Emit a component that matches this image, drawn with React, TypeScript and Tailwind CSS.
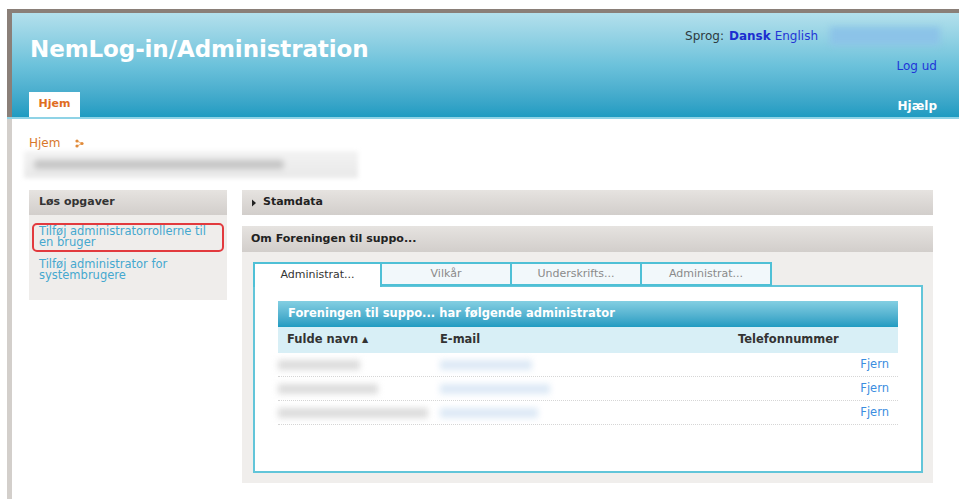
import React from "react";

const font = { fontFamily: '"DejaVu Sans", Verdana, sans-serif' };

function Blur({ className }: { className: string }) {
  return <div className={`blur-[3px] ${className}`} />;
}

function Dots() {
  return (
    <svg width="9" height="9" viewBox="0 0 9 9" className="ml-[15px]">
      <path d="M2 2 L7 4.5 L2 7" stroke="#f0b070" strokeWidth="1" fill="none" />
      <circle cx="2" cy="2" r="1.6" fill="#e08a3a" />
      <circle cx="7" cy="4.5" r="1.6" fill="#e08a3a" />
      <circle cx="2" cy="7" r="1.6" fill="#e08a3a" />
    </svg>
  );
}

const rows = [
  { name: "w-[82px]", mail: "w-[92px]" },
  { name: "w-[100px]", mail: "w-[110px]" },
  { name: "w-[150px]", mail: "w-[98px]" },
];

export default function App() {
  return (
    <div className="w-[959px] h-[499px] overflow-hidden bg-white pt-[9px] pl-[7px]" style={font}>
      {/* header */}
      <header className="h-[108px] border-t-[4px] border-l-[5px] border-[#8a7f78] bg-gradient-to-b from-[#b3e0ec] via-[#6cc2db] to-[#1d9bc1] flex flex-col relative">
        <div className="flex-1 flex">
          <div className="flex-1 pl-[18px] pt-[21px]">
            <h1 className="text-white font-bold text-[23px] leading-[30px] tracking-[-0.1px]">NemLog-in/Administration</h1>
          </div>
          <div className="flex flex-col items-end pr-[19px] pt-[14px]">
            <div className="flex items-center text-[12px] leading-[16px]">
              <span className="text-[#2e3a40]">Sprog:</span>
              <span className="text-[#1c2ed0] font-bold ml-[5px]">Dansk</span>
              <span className="text-[#2435d6] ml-[4px]">English</span>
              <Blur className="ml-[12px] w-[110px] h-[18px] bg-[#8cc3e8]" />
            </div>
            <a className="text-[#1f35d8] text-[12px] leading-[16px] mt-[13px] mr-[3px]">Log ud</a>
          </div>
        </div>
        <div className="flex items-end justify-between h-[25px] pl-[17px] pr-[19px]">
          <div className="bg-white h-[25px] w-[51px] flex items-center justify-center text-[11px] font-bold text-[#e06d1f]">Hjem</div>
          <span className="text-white font-bold text-[12px] leading-[16px] mb-[3px] mr-[3px]">Hjælp</span>
        </div>
      </header>
      <div className="h-[2px] bg-[#8fd3e6]" />

      {/* body */}
      <div className="border-l-[5px] border-[#d3cfcb] h-[382px] pl-[17px] pr-[26px] pt-[17px]">
        <div className="flex items-center h-[14px] text-[12px] text-[#d8772c]">
          <span>Hjem</span>
          <Dots />
        </div>
        <div className="mt-[1px] -ml-[5px] w-[334px] h-[27px] bg-gradient-to-b from-[#f3f3f3] to-[#e9e9e9] blur-[2px] flex items-center pl-[10px]">
          <div className="w-[250px] h-[9px] bg-[#c4c4c4] rounded-sm blur-[2px]" />
        </div>

        <div className="flex mt-[12px] gap-[15px]">
          {/* left task panel */}
          <aside className="w-[198px] h-[110px] bg-[#efedeb] self-start">
            <div className="h-[25px] bg-gradient-to-b from-[#e6e3e0] to-[#d2cecb] flex items-center pl-[10px] text-[11px] font-bold text-[#333]">Løs opgaver</div>
            <div className="px-[3px] pt-[8px] text-[11.5px] leading-[11px] text-[#45a8cf]">
              <div className="border-2 border-[#e23a3e] rounded-[5px] pl-[5px] pr-[8px] pt-[1px] pb-[2px]">Tilføj administratorrollerne til en bruger</div>
              <div className="px-[7px] mt-[7px]">Tilføj administrator for systembrugere</div>
            </div>
          </aside>

          {/* right column */}
          <section className="flex-1">
            <div className="h-[25px] bg-gradient-to-b from-[#e6e3e0] to-[#d2cecb] flex items-center pl-[9px] text-[11px] font-bold text-[#222]">
              <svg width="6" height="8" viewBox="0 0 6 8" className="mr-[6px]"><path d="M1 0.5 L5 4 L1 7.5 Z" fill="#222" /></svg>
              Stamdata
            </div>
            <div className="mt-[11px] bg-[#f0eeec] pb-[10px]">
              <div className="h-[26px] bg-gradient-to-b from-[#e6e3e0] to-[#d2cecb] flex items-center pl-[9px] text-[11px] font-bold text-[#222]">Om Foreningen til suppo...</div>
              <div className="pl-[11px] pr-[10px] pt-[10px]">
                <div className="flex h-[24px] text-[11px]">
                  <div className="w-[129px] bg-white border-2 border-b-0 border-[#4fc0d6] text-[#333] flex items-center justify-center relative z-10 h-[25px]">Administrat...</div>
                  {["Vilkår", "Underskrifts...", "Administrat..."].map((t) => (
                    <div key={t} className="w-[130px] bg-[#f2f8fb] border-2 border-l-0 border-[#4fc0d6] text-[#8a8a8a] flex items-start justify-center pt-[2px]">{t}</div>
                  ))}
                </div>
                <div className="h-[188px] bg-white border-2 border-[#62c5d9] -mt-[1px] px-[23px] pt-[14px]">
                  <div className="h-[26px] bg-gradient-to-b from-[#83cfe2] to-[#1e9bc1] flex items-center pl-[10px] text-white font-bold text-[11.5px]">Foreningen til suppo... har følgende administrator</div>
                  <div className="h-[26px] bg-[#d8eff6] flex items-center text-[11.5px] font-bold text-[#333]">
                    <span className="w-[162px] pl-[9px] flex items-center">Fulde navn<span className="text-[8px] ml-[4px]">▲</span></span>
                    <span className="w-[298px]">E-mail</span>
                    <span>Telefonnummer</span>
                  </div>
                  {rows.map((r, i) => (
                    <div key={i} className="h-[24px] border-b border-dotted border-[#d6d6d6] flex items-center text-[11.5px]">
                      <div className="w-[162px]"><Blur className={`${r.name} h-[10px] bg-[#dcdcdc]`} /></div>
                      <div className="flex-1"><Blur className={`${r.mail} h-[10px] bg-[#dde9f6]`} /></div>
                      <a className="text-[#3b8de0] pr-[9px]">Fjern</a>
                    </div>
                  ))}
                </div>
              </div>
            </div>
          </section>
        </div>
      </div>
    </div>
  );
}
